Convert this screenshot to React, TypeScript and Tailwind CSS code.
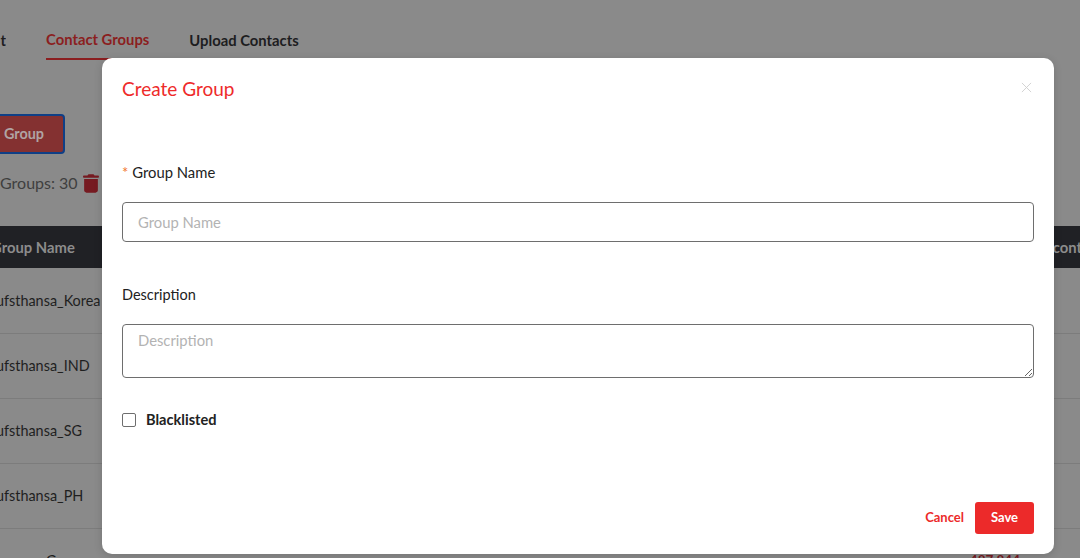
const font = "font-['Lato','Noto_Sans',sans-serif]"

function TrashIcon() {
  return (
    <svg viewBox="0 0 448 512" className="h-[19px] w-[16px] fill-[#761a21]">
      <path d="M135 17.7C139 7 149 0 160.400 0h127.200C299 0 309 7 313 17.700L320 32h96c17.700 0 32 14.300 32 32s-14.300 32-32 32H32C14.300 96 0 81.700 0 64s14.300-32 32-32h96l7-14.300zM32 128h384v320c0 35.300-28.700 64-64 64H96c-35.300 0-64-28.700-64-64V128z" />
    </svg>
  )
}

function Background() {
  const rows = ["Lufsthansa_Korea", "Lufsthansa_IND", "Lufsthansa_SG", "Lufsthansa_PH"]

  return (
    <div className="h-[558px] w-[1080px] overflow-hidden bg-[#8a8a8a]">
      <div className="-ml-[40px] w-[1160px] pt-[20px]">
        <div className="flex h-[40px] items-center gap-[40px] pl-[30px] text-[14.8px] font-bold text-[#1d1d1f]">
          <span className="w-[16px] overflow-hidden text-right">t</span>
          <span className="flex h-[40px] items-center border-b-2 border-[#8b1e20] text-[#8b1e20]">
            Contact Groups
          </span>
          <span>Upload Contacts</span>
        </div>
        <div className="mt-[54px] flex h-[40px] w-[105px] items-center justify-end rounded-[4px] border-2 border-[#0f3f86] bg-[#843131] pr-[19px] text-[14.4px] font-bold text-[#b0a4a4]">
          Group
        </div>
        <div className="mt-[18px] flex h-[22px] items-center gap-[5px] pl-[12px] text-[16px] text-[#3f3f3f]">
          <span className="pl-[28px]">Groups: 30</span>
          <TrashIcon />
        </div>
        <div className="mt-[32px] flex h-[42px] items-center justify-between bg-[#202125] pl-[31px] text-[14.8px] font-bold text-[#8c8c8c]">
          <span>Group Name</span>
          <span className="w-[111px] whitespace-nowrap">No. of contacts</span>
        </div>
        <div className="pt-[1px]">
          {rows.map((row) => (
            <div
              key={row}
              className="flex h-[65px] items-center border-b border-[#7c7c7c] pl-[29px] text-[14.4px] text-[#1f1f1f]"
            >
              {row}
            </div>
          ))}
        </div>
        <div className="flex h-[30px] justify-between pl-[86px] pr-[100px] pt-[21px] text-[14.4px] text-[#1f1f1f]">
          <span>Group</span>
          <span className="text-[13.5px] font-bold text-[#761a21]">487,844</span>
        </div>
      </div>
    </div>
  )
}

function Modal() {
  const fieldClass =
    "block w-full rounded-[4px] border border-[#6e6e6e] bg-white px-[15px] text-[14.8px] text-[#222] outline-none placeholder:text-[#b3b3b3]"

  return (
    <div className="absolute left-[102px] top-[58px] flex h-[496px] w-[952px] flex-col rounded-[10px] bg-white px-[20px] pb-[20px] shadow-[0_2px_8px_rgba(0,0,0,0.15)]">
      <div className="flex h-[62px] items-center justify-between">
        <h2 className="text-[19px] font-normal text-[#ee2a2a]">Create Group</h2>
        <svg viewBox="0 0 12 12" className="mb-[4px] mr-[2px] h-[11px] w-[11px] stroke-[#d0d0d0]" fill="none">
          <path d="M1 1l10 10M11 1L1 11" strokeWidth="1" />
        </svg>
      </div>
      <label className="mt-[41px] block text-[14.8px] leading-[22px] text-[#222]">
        <span className="mr-[4px] text-[#f2762e]">*</span>
        Group Name
      </label>
      <input placeholder="Group Name" className={`${fieldClass} mt-[19px] h-[40px] pb-[1px]`} />
      <label className="mt-[41px] block pt-[1px] text-[14.5px] leading-[22px] text-[#222]">Description</label>
      <textarea placeholder="Description" className={`${fieldClass} mt-[18px] h-[54px] pt-[4px]`} />
      <label className="mt-[32px] flex h-[20px] items-center gap-[10px] text-[14.6px] font-bold text-[#222]">
        <span className="h-[14px] w-[14px] rounded-[2px] border border-[#6e6e6e] bg-white" />
        Blacklisted
      </label>
      <div className="mt-auto flex items-center justify-end gap-[11px]">
        <button className="h-[32px] text-[13px] font-bold text-[#ec2a2a]">Cancel</button>
        <button className="h-[32px] w-[59px] rounded-[3px] bg-[#ec2a2a] text-[13px] font-bold text-white">Save</button>
      </div>
    </div>
  )
}

export default function App() {
  return (
    <div className={`relative h-[558px] w-[1080px] overflow-hidden ${font}`}>
      <Background />
      <Modal />
    </div>
  )
}
